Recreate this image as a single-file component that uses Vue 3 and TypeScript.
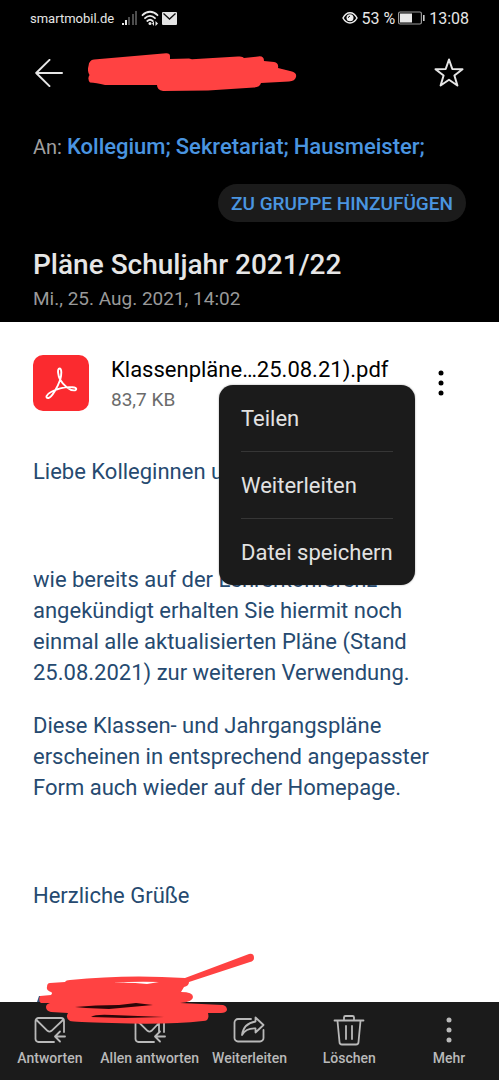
<script setup lang="ts">
import { ref } from 'vue'

interface Attachment {
  name: string
  size: string
}

const recipients: string[] = ['Kollegium;', 'Sekretariat;', 'Hausmeister;']
const attachment: Attachment = { name: 'Klassenpläne…25.08.21).pdf', size: '83,7 KB' }
const menuItems: string[] = ['Teilen', 'Weiterleiten', 'Datei speichern']
const menuOpen = ref(true)
const starred = ref(false)
</script>

<template>
  <div class="page">
    <header class="head">
      <div class="status">
        <span class="carrier">smartmobil.de</span>
        <svg class="signal" width="16" height="16" viewBox="0 0 16 16" aria-hidden="true">
          <g fill="#e8e8e8">
            <rect x="0" y="13" width="2" height="2" />
            <rect x="3" y="10" width="2" height="5" />
          </g>
          <g fill="#4c4c4c">
            <rect x="6" y="7" width="2" height="8" />
            <rect x="10" y="4" width="2" height="11" />
            <rect x="13" y="1" width="2" height="14" />
          </g>
        </svg>
        <svg width="18" height="16" viewBox="0 0 18 16" aria-hidden="true">
          <g fill="none" stroke="#e8e8e8" stroke-width="1.8" stroke-linecap="round">
            <path d="M1.500 5.200C6 .6 12 .6 16.500 5.200" />
            <path d="M4 8.200c3-3 7-3 10 0" />
            <path d="M6.300 11c1.700-1.600 3.700-1.600 5.400 0" />
          </g>
          <circle cx="9" cy="13.500" r="1.500" fill="#e8e8e8" />
          <path d="M13 11l-2 2.500 2 2.500zM14.500 11l2.500 2.500-2.500 2.500z" fill="#e8e8e8" />
        </svg>
        <svg width="15" height="13" viewBox="0 0 15 13" aria-hidden="true">
          <rect width="15" height="13" rx="1" fill="#e4e4e4" />
          <path d="M1.500 1.500l6 5.500 6-5.500" fill="none" stroke="#111" stroke-width="1.300" />
        </svg>
        <span class="spacer"></span>
        <svg width="16" height="14" viewBox="0 0 16 14" aria-hidden="true">
          <path d="M1 7c3.500-7 10.500-7 14 0-3.500 6.500-10.500 6.500-14 0z" fill="none" stroke="#eee" stroke-width="1.500" />
          <circle cx="8" cy="6.800" r="3.500" fill="#eee" />
          <path d="M6.400 6.800A1.700 1.700 0 0 1 8 5.200" fill="none" stroke="#111" stroke-width="1" />
        </svg>
        <span class="clock">53 %</span>
        <svg class="battery" width="27" height="14" viewBox="0 0 27 14" aria-hidden="true">
          <rect x=".6" y="1" width="22.800" height="12" rx="1.500" fill="none" stroke="#999" stroke-width="1.200" />
          <rect x="2" y="2.500" width="12" height="9" fill="#e8e8e8" />
          <rect x="25" y="4" width="1.600" height="6" fill="#ccc" />
        </svg>
        <span class="clock">13:08</span>
      </div>

      <div class="appbar">
        <button class="icon-btn" type="button" aria-label="Zurück">
          <svg width="28" height="28" viewBox="0 0 28 28" fill="none" stroke="#e6e6e6" stroke-width="2" stroke-linecap="round" stroke-linejoin="round">
            <path d="M14.500 .9L1.200 14l13.300 13.100M1.200 14H27" />
          </svg>
        </button>
        <svg class="sender" width="210" height="40" viewBox="0 0 210 40" aria-hidden="true">
          <path fill="#ff4242" d="M6 6.500L78 0.200Q82 0 82 3V6L101 5.500 104 6.200 150 3.500Q155 3 156 5L170 3.500Q176 2.500 176 8L186 9Q191 10 190 15L204 18.500Q209 20 208 24 207 28 201 28.500L173 30Q172 34 166 34.500L120 37.500 75 38Q69 37 69 32L17 32Q8 29.500 2 29.500-1 26 1.500 22-1 18 .5 13 1 7 6 6.500z" />
        </svg>
        <span class="spacer"></span>
        <button class="icon-btn" type="button" aria-label="Favorit" :aria-pressed="starred" @click="starred = !starred">
          <svg width="30" height="30" viewBox="0 0 30 30" fill="none" stroke="#e6e6e6" stroke-width="2" stroke-linejoin="round">
            <path d="M15 1.500l3.300 9.500 10.200.2-8.100 6.300 3 10L15 21.700 6.600 27.500l3-10-8.100-6.300 10.200-.2z" />
          </svg>
        </button>
      </div>

      <div class="recipients">
        <span class="to">An:</span>
        <a v-for="name in recipients" :key="name" href="#">{{ name }}</a>
      </div>
      <div class="group-row">
        <button class="group" type="button">ZU GRUPPE HINZUFÜGEN</button>
      </div>
      <h1>Pläne Schuljahr 2021/22</h1>
      <p class="date">Mi., 25. Aug. 2021, 14:02</p>
    </header>

    <main>
      <section class="file">
        <svg width="56" height="56" viewBox="0 0 56 56" aria-hidden="true">
          <rect width="56" height="56" rx="10" fill="#fb2a2f" />
          <path d="M26.500 13.500c-2.500 0-1.500 7 .7 11.300C25 31 19 42.500 15.500 43c-3.500.5-2.500-3.500 2.500-6 6-3.200 15-5.300 21.500-4.800 5 .4 4.500 3.300 1.500 3.200-4.500 0-10.500-5-13.800-10.600 1.400-5 1.800-11.300-.7-11.300z" fill="none" stroke="#fff" stroke-width="1.900" stroke-linejoin="round" />
        </svg>
        <div class="file-info">
          <span class="file-name">{{ attachment.name }}</span>
          <span class="file-size">{{ attachment.size }}</span>
        </div>
        <div class="more">
          <button class="icon-btn" type="button" aria-label="Optionen" :aria-expanded="menuOpen" @click="menuOpen = !menuOpen">
            <svg width="6" height="28" viewBox="0 0 6 28" fill="#000">
              <circle cx="3" cy="4" r="2.500" /><circle cx="3" cy="14" r="2.500" /><circle cx="3" cy="24" r="2.500" />
            </svg>
          </button>
          <div v-if="menuOpen" class="menu" role="menu">
            <button v-for="item in menuItems" :key="item" type="button" role="menuitem">{{ item }}</button>
          </div>
        </div>
      </section>

      <article class="body">
        <p class="wide">Liebe Kolleginnen und</p>
        <p>wie bereits auf der Lehrerkonferenz angekündigt erhalten Sie hiermit noch einmal alle aktualisierten Pläne (Stand 25.08.2021) zur weiteren Verwendung.</p>
        <p class="wide">Diese Klassen- und Jahrgangspläne erscheinen in entsprechend angepasster Form auch wieder auf der Homepage.</p>
        <p>Herzliche Grüße</p>
      </article>
    </main>

    <nav class="toolbar">
      <svg class="scribble" width="220" height="72" viewBox="0 0 220 72" aria-hidden="true">
        <path d="M0 48l2-6 2 0-1 6z" fill="#31567d" />
        <path fill="#ff4242" d="M13 29L28 28Q29 26 33 26 90 20 148 24L212 0Q217-1 217 4 217 7 213 8L152 28Q152 32 147 33L144 38Q156 38 156 43 156 48 143 49L186 51Q190 52 190 56 189 59 184 59L171 59Q173 67 166 67 130 71 75 69 36 68 33 67 28 64 31 59L14 58Q9 57 9 53 9 50 13 49L4 49Q1 47 3 42L14 41Q16 39 14 38 9 36 10 33 10 29 13 29z" />
        <path d="M38 53Q58 51 82 51L99 49 116 51 72 55 49 54zM54 63Q58 60 75 61L127 63 88 64z" fill="#2a0608" />
        <path d="M76 29Q98 27 122 28L110 30Q92 28 76 29z" fill="#fff" />
      </svg>
      <button type="button">
        <svg width="32" height="28" viewBox="0 0 32 28">
          <path d="M20 26H4.500a3 3 0 0 1-3-3V5a3 3 0 0 1 3-3H27a3 3 0 0 1 3 3v11M2 3.500l11.500 11.300q2 1.700 4 0L29.500 3.500M31 20.500H21M26 15.500l-5 5 5 5" />
        </svg>
        <span>Antworten</span>
      </button>
      <button type="button">
        <svg width="32" height="28" viewBox="0 0 32 28">
          <path d="M20 26H4.500a3 3 0 0 1-3-3V5a3 3 0 0 1 3-3H27a3 3 0 0 1 3 3v11M2 3.500l11.500 11.300q2 1.700 4 0L25 7v9M31 20.500H21M26 15.500l-5 5 5 5" />
        </svg>
        <span>Allen antworten</span>
      </button>
      <button type="button">
        <svg width="32" height="28" viewBox="0 0 32 28">
          <path d="M18 3H5a3.500 3.500 0 0 0-3.500 3.500V22A3.500 3.500 0 0 0 5 25.500h22a3.500 3.500 0 0 0 3.500-3.500v-8M22.500 1.500l8 7.500-8 7.500V12.500Q13 12 9 19 10.500 7.500 22.500 5.500z" />
        </svg>
        <span>Weiterleiten</span>
      </button>
      <button type="button">
        <svg width="32" height="32" viewBox="0 0 32 32">
          <path d="M1.500 6.500h29M11 6V3.500A1.500 1.500 0 0 1 12.500 2h7A1.500 1.500 0 0 1 21 3.500V6M4.500 7l2 21a2.500 2.500 0 0 0 2.500 2.500h14a2.500 2.500 0 0 0 2.500-2.500l2-21M13 12v13M19 12v13" />
        </svg>
        <span>Löschen</span>
      </button>
      <button type="button">
        <svg class="dots" width="6" height="28" viewBox="0 0 6 28">
          <circle cx="3" cy="4" r="2.500" /><circle cx="3" cy="14" r="2.500" /><circle cx="3" cy="24" r="2.500" />
        </svg>
        <span>Mehr</span>
      </button>
    </nav>
  </div>
</template>

<style>
body {
  margin: 0;
}
</style>

<style scoped>
.page {
  display: flex;
  flex-direction: column;
  min-height: 100vh;
  background: #fff;
  font-family: Roboto, "Liberation Sans", sans-serif;
}
button {
  margin: 0;
  padding: 0;
  border: 0;
  background: none;
  font: inherit;
  color: inherit;
  cursor: pointer;
}
svg {
  display: block;
  flex: none;
}
h1,
p {
  margin: 0;
}
.spacer {
  flex: 1;
}
.head {
  display: flex;
  flex-direction: column;
  box-sizing: border-box;
  padding: 8px 33px 10px;
  background: #000;
  color: #e6e6e6;
}
.status {
  display: flex;
  align-items: center;
  gap: 3px;
  height: 20px;
  margin: 0 -3px;
}
.carrier {
  font-size: 13px;
}
.signal {
  margin-left: 5px;
}
.clock {
  font-size: 16px;
}
.battery {
  margin-right: 1px;
}
.appbar {
  display: flex;
  align-items: center;
  height: 48px;
  margin-top: 21px;
}
.icon-btn {
  display: flex;
  padding: 2px;
}
.sender {
  margin-left: 23px;
}
.recipients {
  display: flex;
  align-items: baseline;
  gap: 5px;
  margin-top: 36px;
  line-height: 28px;
  font-size: 20px;
  white-space: nowrap;
}
.to {
  color: #a0a0a0;
}
.recipients a {
  color: #4a95e0;
  font-size: 22px;
  font-weight: 500;
  text-decoration: none;
}
.group-row {
  display: flex;
  justify-content: flex-end;
  margin-top: 23px;
}
.group {
  height: 38px;
  padding: 0 13px;
  border-radius: 19px;
  background: #1b1b1b;
  color: #4a95e0;
  font-size: 19px;
  font-weight: 500;
}
h1 {
  margin-top: 26px;
  font-size: 28px;
  line-height: 34px;
  font-weight: 500;
}
.date {
  margin-top: 4px;
  font-size: 19px;
  line-height: 26px;
  color: #999;
}
main {
  flex: 1;
  padding: 33px 33px 40px;
}
.file {
  display: flex;
  align-items: flex-start;
}
.file-info {
  display: flex;
  flex: 1;
  flex-direction: column;
  margin-left: 22px;
  white-space: nowrap;
}
.file-name {
  font-size: 22px;
  line-height: 30px;
  color: #000;
}
.file-size {
  font-size: 19px;
  line-height: 30px;
  color: #6b6b6b;
}
.more {
  position: relative;
  margin-top: 12px;
  margin-right: 20px;
}
.menu {
  position: absolute;
  top: 18px;
  right: 31px;
  z-index: 2;
  width: 152px;
  padding: 0 22px;
  border-radius: 14px;
  background: #1b1b1b;
  color: #e2e2e2;
  box-shadow: 0 0 2px rgba(0, 0, 0, 0.4);
}
.menu button {
  display: block;
  width: 100%;
  height: 66px;
  font-size: 22px;
  text-align: left;
  white-space: nowrap;
}
.menu button + button {
  height: 67px;
  border-top: 1px solid #363636;
}
.body {
  margin-top: 41px;
  font-size: 22px;
  line-height: 31px;
  color: #264a70;
}
.body p {
  margin-bottom: 22px;
}
.body .wide {
  margin-bottom: 77px;
}
.toolbar {
  position: relative;
  display: grid;
  grid-template-columns: repeat(5, 1fr);
  height: 78px;
  background: #1b1b1b;
  color: #b9b9b9;
}
.toolbar button {
  display: grid;
  grid-template-rows: 32px 20px;
  align-content: start;
  gap: 2px;
  padding-top: 12px;
  place-items: center;
  font-size: 14px;
  font-weight: 500;
  white-space: nowrap;
}
.toolbar button svg {
  fill: none;
  stroke: #b9b9b9;
  stroke-width: 1.800;
  stroke-linecap: round;
  stroke-linejoin: round;
}
.toolbar button .dots {
  fill: #b9b9b9;
  stroke: none;
}
.scribble {
  position: absolute;
  left: 37px;
  top: -48px;
  z-index: 1;
  overflow: visible;
  pointer-events: none;
}
</style>
